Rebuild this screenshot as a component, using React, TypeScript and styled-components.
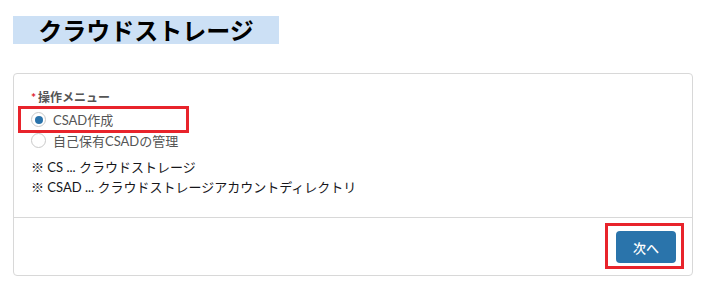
import React, { FC } from 'react'
import styled, { createGlobalStyle } from 'styled-components'

const GlobalStyle = createGlobalStyle`
  body {
    margin: 0;
    background: #ffffff;
    font-family: Lato, "Noto Sans CJK JP", sans-serif;
  }
`

const Page = styled.div`
  padding: 16px 13px;
`

const Title = styled.h1`
  width: 266px;
  height: 28px;
  margin: 0 0 29px;
  background: #cce0f5;
  color: #000;
  font-family: "Noto Sans CJK JP", sans-serif;
  font-size: 24px;
  font-weight: 700;
  line-height: 28px;
  text-align: center;
`

const Card = styled.div`
  width: 680px;
  box-sizing: border-box;
  border: 1px solid #d8d8d8;
  border-radius: 4px;
`

const Body = styled.div`
  padding: 14px 17px 20px;
  border-bottom: 1px solid #d8d8d8;
`

const FieldLabel = styled.div`
  height: 20px;
  margin-bottom: 1px;
  color: #555;
  font-size: 12px;
  font-weight: 700;
  line-height: 20px;
`

const Required = styled.span`
  color: #e0202e;
  margin-right: 2px;
`

const Options = styled.div`
  display: flex;
  flex-direction: column;
  align-items: flex-start;
  margin-bottom: 6px;
`

const Option = styled.label<{ $marked?: boolean }>`
  display: flex;
  align-items: center;
  gap: 7px;
  height: 21px;
  box-sizing: border-box;
  color: #555;
  font-size: 13px;
  ${({ $marked }) =>
    $marked &&
    `
    width: 165px;
    margin-left: -10px;
    padding-left: 10px;
    outline: 3px solid #e8232b;
  `}
`

const Radio = styled.span<{ $checked?: boolean }>`
  display: flex;
  align-items: center;
  justify-content: center;
  width: 15px;
  height: 15px;
  box-sizing: border-box;
  border: 1px solid #c9c9c9;
  border-radius: 50%;
  background: #fff;
  &::after {
    content: '';
    display: ${({ $checked }) => ($checked ? 'block' : 'none')};
    width: 8px;
    height: 8px;
    border-radius: 50%;
    background: #2a73ab;
  }
`

const Note = styled.div`
  color: #16161a;
  font-size: 13px;
  line-height: 20px;
`

const Footer = styled.div`
  display: flex;
  justify-content: flex-end;
  padding: 5px 8px 6px;
`

const Marker = styled.div`
  border: 3px solid #e8232b;
  padding: 5px 5px 3px 8px;
`

const NextButton = styled.button`
  width: 60px;
  height: 32px;
  border: none;
  border-radius: 4px;
  background: #2a74ab;
  color: #fff;
  font-family: "Noto Sans CJK JP", sans-serif;
  font-size: 13px;
  font-weight: 500;
  cursor: pointer;
`

const options = [
  { label: 'CSAD作成', checked: true },
  { label: '自己保有CSADの管理', checked: false },
]

const App: FC = () => {
  return (
    <Page>
      <GlobalStyle />
      <Title>クラウドストレージ</Title>
      <Card>
        <Body>
          <FieldLabel>
            <Required>*</Required>操作メニュー
          </FieldLabel>
          <Options>
            {options.map((o) => (
              <Option key={o.label} $marked={o.checked}>
                <Radio $checked={o.checked} />
                {o.label}
              </Option>
            ))}
          </Options>
          <Note>※ CS ... クラウドストレージ</Note>
          <Note>※ CSAD ... クラウドストレージアカウントディレクトリ</Note>
        </Body>
        <Footer>
          <Marker>
            <NextButton>次へ</NextButton>
          </Marker>
        </Footer>
      </Card>
    </Page>
  )
}

export default App
